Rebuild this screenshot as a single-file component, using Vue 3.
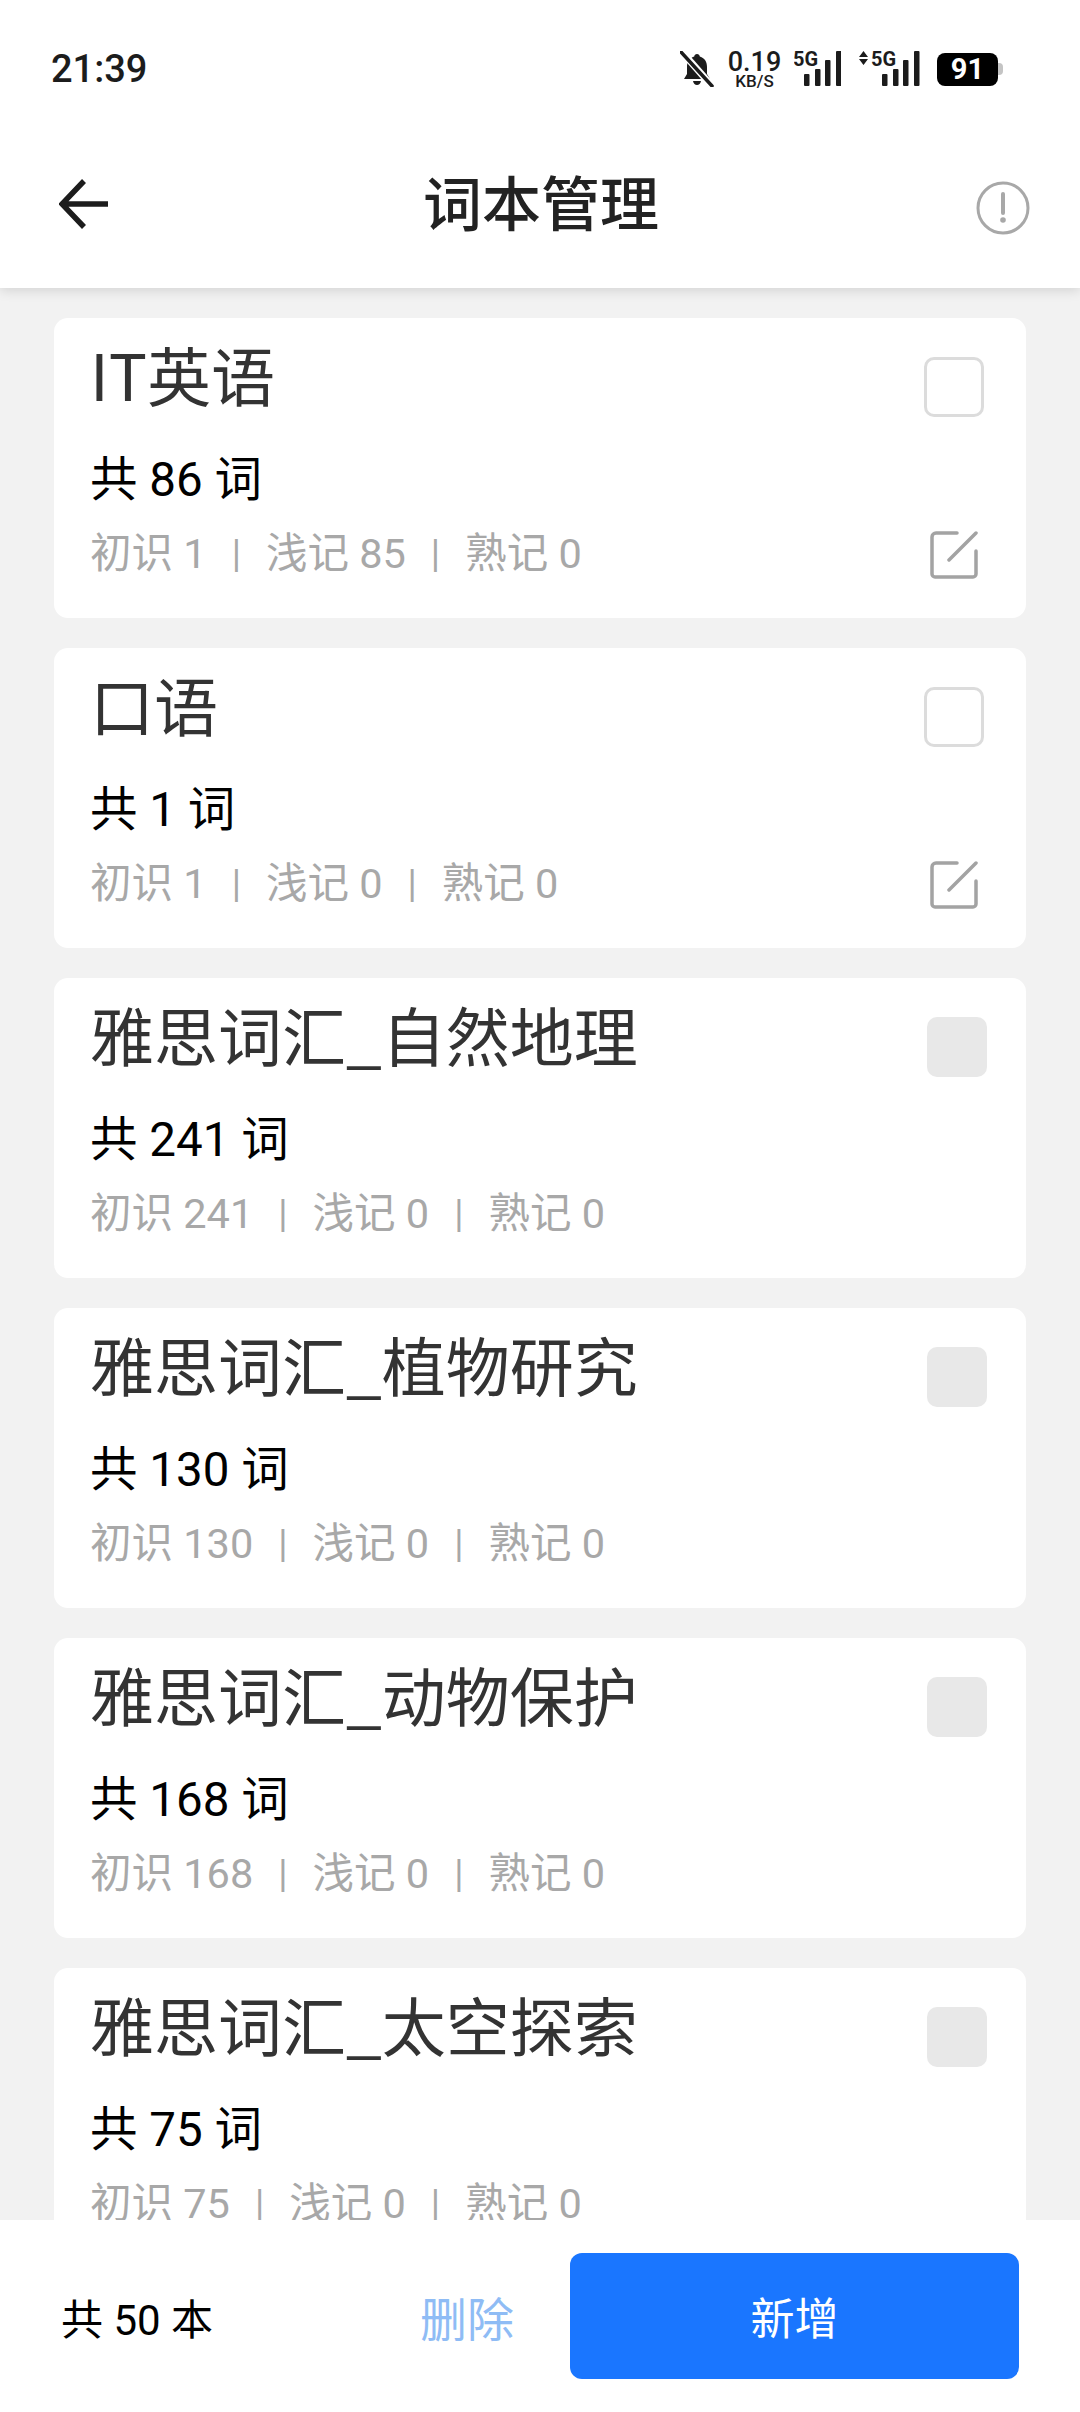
<script setup>
const books = [
  { name: "IT英语", total: 86, a: 1, b: 85, c: 0, own: true },
  { name: "口语", total: 1, a: 1, b: 0, c: 0, own: true },
  { name: "雅思词汇_自然地理", total: 241, a: 241, b: 0, c: 0 },
  { name: "雅思词汇_植物研究", total: 130, a: 130, b: 0, c: 0 },
  { name: "雅思词汇_动物保护", total: 168, a: 168, b: 0, c: 0 },
  { name: "雅思词汇_太空探索", total: 75, a: 75, b: 0, c: 0 },
];
</script>

<template>
  <div class="page">
    <header class="top">
      <div class="status">
        <span class="time">21:39</span>
        <div class="status__right">
          <svg class="bell" width="34" height="36" viewBox="0 0 34 36">
            <path d="M17 3c1.6 0 2.6 1 2.8 2.4C25 7 27 11 27 16v7l3 5H4l3-5v-7c0-5 2-9 7.2-10.6C14.400 4 15.400 3 17 3z" fill="#1c1c1c" />
            <path d="M13 30h8c-.5 2.600-2 4-4 4s-3.500-1.400-4-4z" fill="#1c1c1c" />
            <path d="M2 1l30 34" stroke="#fff" stroke-width="7" />
            <path d="M1 1l31 34" stroke="#1c1c1c" stroke-width="3.500" stroke-linecap="round" />
          </svg>
          <div class="speed">
            <span class="speed__num">0.19</span>
            <span class="speed__unit">KB/S</span>
          </div>
          <svg class="signal signal--first" width="47" height="44" viewBox="0 -8 47 44">
            <text x="-1" y="15" class="net">5G</text>
            <rect x="10" y="23" width="5.500" height="12" rx="1" />
            <rect x="21" y="18" width="5.500" height="17" rx="1" />
            <rect x="31" y="9" width="5.500" height="26" rx="1" />
            <rect x="42" y="0" width="5.500" height="35" rx="1" />
          </svg>
          <svg class="signal signal--second" width="61" height="44" viewBox="0 -8 61 44">
            <path d="M4.500 0l4.500 6H0zM4.500 14L0 8h9z" />
            <text x="12" y="15" class="net">5G</text>
            <rect x="23" y="23" width="5.500" height="12" rx="1" />
            <rect x="34" y="18" width="5.500" height="17" rx="1" />
            <rect x="44" y="9" width="5.500" height="26" rx="1" />
            <rect x="55" y="0" width="5.500" height="35" rx="1" />
          </svg>
          <div class="battery">
            <span class="battery__body">91</span>
            <span class="battery__nub"></span>
          </div>
        </div>
      </div>
      <div class="nav">
        <svg class="back" width="50" height="50" viewBox="0 0 50 50" fill="none">
          <path d="M25 2L3 25l22 23M3 25h46" stroke="#1c1c1c" stroke-width="5.500" />
        </svg>
        <h1 class="nav__title">词本管理</h1>
        <svg class="info" width="54" height="54" viewBox="0 0 54 54" fill="none">
          <circle cx="27" cy="27" r="25" stroke="#a8a8a8" stroke-width="3" />
          <path d="M27 13v19" stroke="#a8a8a8" stroke-width="4" stroke-linecap="round" />
          <circle cx="27" cy="39" r="2.800" fill="#a8a8a8" />
        </svg>
      </div>
    </header>

    <main class="list">
      <article v-for="book in books" :key="book.name" class="card">
        <div class="card__text">
          <div class="card__name">{{ book.name }}</div>
          <div class="card__count">共 {{ book.total }} 词</div>
          <div class="card__stats">
            <span>初识 {{ book.a }}</span>
            <span class="sep">|</span>
            <span>浅记 {{ book.b }}</span>
            <span class="sep">|</span>
            <span>熟记 {{ book.c }}</span>
          </div>
        </div>
        <div class="card__side">
          <span :class="['check', { 'check--off': !book.own }]"></span>
          <svg v-if="book.own" class="edit" width="48" height="48" viewBox="0 0 48 48" fill="none">
            <path d="M27 2H6a4 4 0 0 0-4 4v37a3 3 0 0 0 3 3h38a3 3 0 0 0 3-3V20" stroke="#a3a3a3" stroke-width="3.500" stroke-linecap="round" />
            <path d="M46 2L19 29" stroke="#a3a3a3" stroke-width="3.500" stroke-linecap="round" />
          </svg>
        </div>
      </article>
    </main>

    <footer class="bottom">
      <span class="bottom__total">共 50 本</span>
      <span class="bottom__del">删除</span>
      <button class="bottom__add">新增</button>
    </footer>
  </div>
</template>

<style scoped>
.page {
  width: 1080px;
  height: 2412px;
  display: flex;
  flex-direction: column;
  overflow: hidden;
  background: #f2f2f2;
  font-family: Roboto, "Noto Sans CJK SC", sans-serif;
}

.top {
  position: relative;
  z-index: 2;
  height: 288px;
  flex: none;
  background: #fff;
  box-shadow: 0 2px 12px rgba(0, 0, 0, 0.14);
}

.status {
  display: flex;
  justify-content: space-between;
  align-items: center;
  height: 36px;
  padding: 51px 77px 0 51px;
}

.time {
  font-size: 38px;
  font-weight: 500;
  color: #1c1c1c;
  line-height: 38px;
}

.status__right {
  display: flex;
  align-items: center;
}

.speed {
  display: flex;
  flex-direction: column;
  align-items: center;
  width: 51px;
  margin-left: 15px;
  color: #1c1c1c;
}

.speed__num {
  font-size: 27px;
  line-height: 23px;
  font-weight: 500;
}

.speed__unit {
  font-size: 17px;
  line-height: 14px;
  font-weight: 500;
}

.signal {
  fill: #1c1c1c;
  margin-top: -8px;
}

.signal--first {
  margin-left: 14px;
}

.signal--second {
  margin-left: 18px;
}

.net {
  font-size: 20px;
  font-weight: 700;
  font-family: Roboto, sans-serif;
}

.battery {
  display: flex;
  align-items: center;
  margin-left: 17px;
}

.battery__body {
  width: 61px;
  height: 33px;
  border-radius: 8px;
  background: #000;
  color: #fff;
  font-size: 29px;
  font-weight: 700;
  line-height: 33px;
  text-align: center;
}

.battery__nub {
  width: 5px;
  height: 12px;
  border-radius: 0 4px 4px 0;
  background: #c4c4c4;
}

.nav {
  display: flex;
  justify-content: space-between;
  align-items: center;
  padding: 0 50px 0 59px;
  margin-top: 69px;
  height: 100px;
}

.nav__title {
  margin: 0 0 0 -3px;
  font-size: 59px;
  font-weight: 500;
  color: #222;
  line-height: 70px;
}

.info {
  margin-top: 4px;
}

.back {
  margin-top: -4px;
}

.list {
  flex: 1;
  min-height: 0;
  overflow: hidden;
  display: flex;
  flex-direction: column;
  gap: 30px;
  padding: 30px 54px 0;
}

.card {
  flex: none;
  height: 300px;
  box-sizing: border-box;
  display: flex;
  justify-content: space-between;
  padding: 17px 42px 0 36px;
  background: #fff;
  border-radius: 14px;
}

.card__name {
  font-family: "Noto Sans CJK SC", sans-serif;
  font-size: 64px;
  font-weight: 400;
  line-height: 76px;
  color: #333;
}

.card__count {
  margin-top: 41px;
  font-size: 47.500px;
  line-height: 56px;
  color: #000;
}

.card__stats {
  display: flex;
  align-items: center;
  margin-top: 21px;
  font-size: 41.500px;
  line-height: 50px;
  color: #a8a8a8;
}

.sep {
  margin: 0 25px;
  font-size: 38px;
}

.card__side {
  display: flex;
  flex-direction: column;
  align-items: center;
  padding-top: 22px;
  gap: 114px;
}

.check {
  display: block;
  width: 60px;
  height: 60px;
  box-sizing: border-box;
  border: 3px solid #dcdcdc;
  border-radius: 10px;
}

.check--off {
  margin-right: -3px;
  border: none;
  background: #e8e8e8;
}

.bottom {
  position: relative;
  z-index: 2;
  flex: none;
  height: 192px;
  display: flex;
  align-items: center;
  padding: 0 61px 0 61px;
  background: #fff;
}

.bottom__total {
  font-size: 42px;
  color: #000;
}

.bottom__del {
  margin-left: auto;
  margin-right: 56px;
  font-size: 47px;
  color: #8fbcf5;
}

.bottom__add {
  width: 449px;
  height: 126px;
  border: none;
  border-radius: 12px;
  background: #1a76ff;
  color: #fff;
  font-family: inherit;
  font-size: 44px;
}
</style>

<style>
html,
body {
  margin: 0;
  background: #f2f2f2;
}
</style>
